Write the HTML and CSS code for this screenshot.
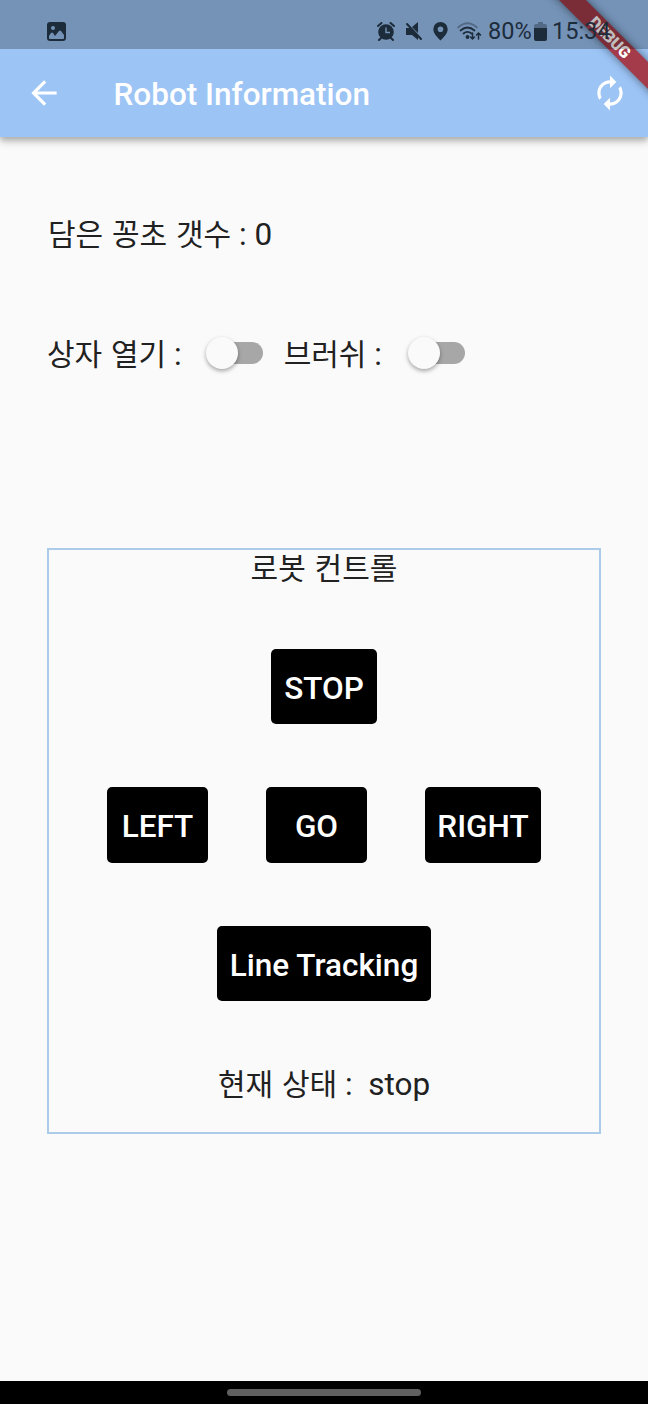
FILE: index.html
```html
<!DOCTYPE html>
<html lang="ko">
<head>
<meta charset="utf-8">
<title>Robot Information</title>
<link rel="stylesheet" href="styles.css">
</head>
<body>
<div class="screen">
  <header class="appbar">
    <svg class="back" width="38" height="38" viewBox="0 0 24 24"><path fill="#fff" d="M20 11H7.83l5.59-5.59L12 4l-8 8 8 8 1.41-1.41L7.83 13H20v-2z"/></svg>
    <h1 class="title">Robot Information</h1>
    <svg class="refresh" width="38" height="38" viewBox="0 0 24 24"><path fill="#fff" d="M12 6v3l4-4-4-4v3c-4.42 0-8 3.58-8 8 0 1.57.46 3.03 1.24 4.26L6.7 14.8A5.87 5.87 0 0 1 6 12c0-3.31 2.69-6 6-6zm6.76 1.74L17.3 9.2c.44.84.7 1.79.7 2.8 0 3.31-2.69 6-6 6v-3l-4 4 4 4v-3c4.42 0 8-3.58 8-8 0-1.57-.46-3.03-1.24-4.26z"/></svg>
  </header>

  <main class="content">
    <p class="line count"><span class="ko">담은 꽁초 갯수</span> : 0</p>
    <div class="switches">
      <p class="line"><span class="ko">상자 열기</span> :</p>
      <span class="switch"><span class="knob"></span></span>
      <p class="line brush"><span class="ko">브러쉬</span> :</p>
      <span class="switch second"><span class="knob"></span></span>
    </div>
    <section class="panel">
      <p class="line"><span class="ko">로봇 컨트롤</span></p>
      <button class="btn stop">STOP</button>
      <div class="row">
        <button class="btn left">LEFT</button>
        <button class="btn go">GO</button>
        <button class="btn right">RIGHT</button>
      </div>
      <button class="btn track">Line Tracking</button>
      <p class="line state"><span class="ko">현재 상태</span> :&nbsp; stop</p>
    </section>
  </main>

  <footer class="navbar"><span class="handle"></span></footer>

  <div class="banner"><span class="ribbon">DEBUG</span></div>

  <div class="status">
    <svg class="photo" width="19" height="19" viewBox="0 0 19 19"><path fill="#1d2c3b" fill-rule="evenodd" d="M3 0h13a3 3 0 0 1 3 3v13a3 3 0 0 1-3 3H3a3 3 0 0 1-3-3V3a3 3 0 0 1 3-3zm3 4a2 2 0 1 0 0 4 2 2 0 0 0 0-4zM2 14v2q0 1 1 1h13q1 0 1-1v-3l-3-4q-1-1-2 0l-4 5-2-3q-1-1-2 0z"/></svg>
    <svg class="alarm" width="18" height="19" viewBox="0 0 18 19"><circle cx="9" cy="10" r="7.8" fill="#1d2c3b"/><path d="M1 4l3.500-3M17 4l-3.500-3M4 16l-2 2M14 16l2 2" stroke="#1d2c3b" stroke-width="2" stroke-linecap="round"/><path d="M9 5.500V10.500H13" fill="none" stroke="#7593b8" stroke-width="1.400"/></svg>
    <svg class="mute" width="18" height="19" viewBox="0 0 18 19"><path fill="#1d2c3b" d="M1 6h4l8 8v4l-6-5H1zM7 5l6-5v11z"/><path d="M2 2l14 15" stroke="#1d2c3b" stroke-width="2" stroke-linecap="round"/></svg>
    <svg class="pin" width="15" height="19" viewBox="0 0 15 19"><path fill="#1d2c3b" fill-rule="evenodd" d="M7.500 0a7.200 7.200 0 0 1 7.200 7.200c0 4.300-4 7.800-7.200 11.300C4.300 15 .3 11.500.3 7.200A7.200 7.200 0 0 1 7.500 0zm0 4.500a2.800 2.800 0 1 0 0 5.600 2.800 2.800 0 0 0 0-5.600z"/></svg>
    <svg class="wifi" width="25" height="19" viewBox="0 0 25 19"><g fill="none" stroke="#1d2c3b" stroke-width="1.700" stroke-linecap="round"><path opacity=".4" d="M1 5.500Q10.500-3 20 5.500"/><path d="M3.500 8.500q7-6 14 0M6.500 11.500q4-3.300 8 0"/><path stroke-width="1.500" d="M15.500 11v6m-2-2l2 2 2-2M21.500 17v-6m-2 2l2-2 2 2"/></g><circle cx="10.500" cy="15" r="1.900" fill="#1d2c3b"/></svg>
    <span class="pct">80%</span>
    <svg class="battery" width="13" height="19" viewBox="0 0 13 19"><path fill="#1d2c3b" opacity=".4" d="M4 0h5v2h2q2 0 2 2v3H0V4q0-2 2-2h2z"/><path fill="#1d2c3b" d="M0 6h13v11q0 2-2 2H2q-2 0-2-2z"/></svg>
    <span class="clock">15:34</span>
  </div>
</div>
</body>
</html>
```
FILE: styles.css
```css
* { box-sizing: border-box; }
body { margin: 0; font-family: Roboto, "Noto Sans CJK KR", sans-serif; color: #212121; }
.screen { position: relative; width: 648px; height: 1404px; overflow: hidden; display: flex; flex-direction: column; background: #fafafa; }

.appbar { position: relative; height: 137px; flex: none; padding: 49px 19px 0 25px; display: flex; align-items: center; background: #9cc4f5; box-shadow: 0 3px 6px rgba(0,0,0,.25), 0 6px 8px rgba(0,0,0,.1); }
.title { margin: 0 auto 0 50.5px; padding-top: 3px; font-size: 31.5px; line-height: 38px; font-weight: 500; color: #fff; }

.content { flex: 1; padding: 76px 47px 0; }
.line { margin: 0; font-size: 31.5px; line-height: 38px; height: 38px; white-space: pre; }
.ko { font-family: "Noto Sans CJK KR", sans-serif; font-size: 30px; word-spacing: .4px; }
.count { padding-left: 1px; }
.switches { margin-top: 82px; height: 38px; display: flex; align-items: flex-start; }
.switch { width: 52px; height: 22px; margin: 9px 0 0 29px; display: flex; align-items: center; border-radius: 11px; background: #a7a7a7; }
.knob { width: 32px; height: 32px; flex: none; margin-left: -5px; border-radius: 50%; background: #fafafa; box-shadow: 0 2px 4px rgba(0,0,0,.35); }
.brush { margin-left: 21px; }
.second { margin-left: 31px; }

.panel { margin-top: 177px; height: 586px; display: flex; flex-direction: column; align-items: center; border: 2px solid #abcbe8; }
.panel .line:first-child { margin: -3px 0 3px; }
.btn { height: 75px; padding: 4px 0 0; border: 0; border-radius: 5px; background: #000; color: #fff; font: 500 31.5px/38px Roboto, sans-serif; }
.stop { width: 106px; margin-top: 61px; }
.row { margin-top: 63px; display: flex; gap: 58px; }
.row .btn { height: 76px; }
.left, .go { width: 101px; }
.right { width: 116px; }
.track { width: 214px; margin-top: 63px; }
.panel .state { margin-top: 62px; }

.navbar { height: 23px; flex: none; display: flex; justify-content: center; align-items: center; background: #000; }
.handle { width: 194px; height: 7px; border-radius: 4px; background: #606060; }

.banner { position: absolute; top: 0; right: 0; width: 130px; height: 130px; overflow: hidden; }
.ribbon { position: absolute; left: -8px; top: 28.400px; width: 200px; height: 18.900px; background: #a33b4a; box-shadow: 0 0 9px rgba(0,0,0,.5); transform: rotate(45deg); color: #fff; font-size: 16px; line-height: 19px; font-weight: 900; text-align: center; }

.status { position: absolute; top: 0; left: 0; width: 648px; height: 49px; padding: 13px 0 0 47px; display: flex; align-items: center; background: rgba(0,0,0,.25); color: #1d2c3b; font-size: 23.5px; line-height: 36px; }
.photo { margin-right: 311px; }
.mute { margin-left: 10px; }
.pin { margin-left: 10px; }
.wifi { margin-left: 9px; }
.pct { margin-left: 6px; width: 46px; }
.clock { margin-left: 5px; }
```
